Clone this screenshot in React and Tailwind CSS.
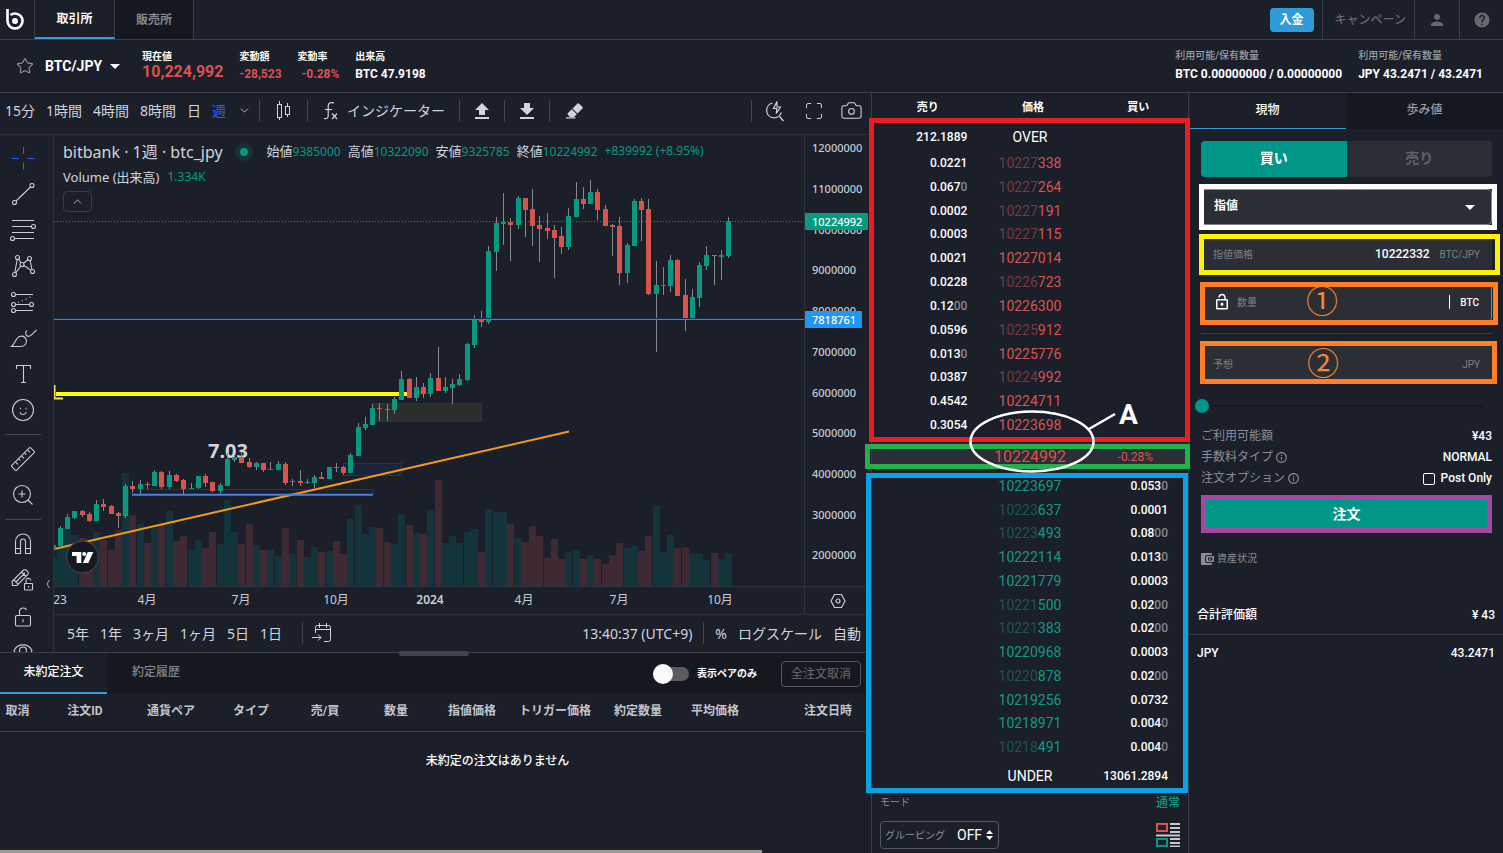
import { useState } from "react";
import { Camera, ChevronDown, ChevronUp, Maximize, Star } from "lucide-react";
import { MdHelp, MdInfoOutline, MdLockOpen, MdPerson } from "react-icons/md";

const UP = "#089981";
const DOWN = "#d9534d";
const PANE_X = 54;
const PANE_Y = 135;
const PANE_BOTTOM = 586;

// [direction, body top, body bottom, wick top, wick bottom, volume top]
const candles = [
  ["u", 545, 549, 545, 549, 558], ["u", 528, 546, 526, 546, 547], ["u", 517, 529, 514, 529, 529],
  ["u", 511, 518, 511, 519, 535], ["d", 511, 515, 510, 517, 538], ["d", 514, 521, 512, 522, 540],
  ["u", 504, 521, 500, 521, 532], ["d", 504, 507, 499, 511, 540], ["d", 506, 514, 505, 514, 550],
  ["d", 513, 516, 512, 528, 530], ["u", 486, 516, 484, 518, 473], ["d", 486, 489, 481, 493, 515],
  ["u", 484, 489, 480, 494, 524], ["d", 484, 485, 482, 489, 543], ["u", 472, 486, 470, 486, 528],
  ["d", 472, 487, 471, 489, 525], ["u", 475, 487, 471, 489, 511], ["d", 475, 481, 474, 482, 541],
  ["d", 480, 489, 479, 494, 536], ["u", 488, 489, 483, 489, 550], ["u", 476, 488, 476, 489, 540],
  ["d", 476, 483, 474, 487, 548], ["d", 482, 491, 482, 492, 532], ["u", 485, 491, 483, 494, 544],
  ["u", 459, 486, 453, 486, 500], ["u", 457, 460, 455, 462, 532], ["d", 457, 463, 452, 463, 544],
  ["d", 462, 467, 458, 468, 524], ["u", 463, 467, 462, 470, 545], ["d", 463, 470, 463, 472, 550],
  ["u", 469, 470, 462, 470, 550], ["u", 464, 470, 461, 470, 556], ["d", 464, 483, 462, 485, 528],
  ["u", 481, 482, 479, 486, 554], ["d", 481, 483, 470, 486, 540], ["u", 482, 483, 479, 484, 557],
  ["u", 477, 483, 475, 488, 547], ["d", 477, 479, 472, 479, 552], ["u", 467, 479, 467, 479, 551],
  ["d", 467, 468, 463, 472, 541], ["d", 467, 473, 466, 475, 554], ["u", 455, 473, 453, 473, 519],
  ["u", 427, 456, 423, 456, 505], ["u", 424, 428, 417, 430, 534], ["u", 408, 425, 404, 425, 527],
  ["d", 408, 409, 403, 421, 528], ["d", 409, 410, 404, 421, 542], ["u", 399, 410, 397, 414, 544],
  ["u", 379, 400, 371, 400, 514], ["d", 379, 398, 378, 398, 525], ["u", 387, 398, 377, 401, 533],
  ["d", 387, 394, 383, 398, 534], ["u", 378, 394, 373, 397, 510], ["d", 378, 391, 347, 391, 480],
  ["u", 387, 391, 377, 393, 543], ["u", 384, 388, 379, 404, 536], ["u", 379, 385, 374, 386, 543],
  ["u", 344, 380, 343, 381, 532], ["u", 319, 345, 315, 348, 529], ["d", 319, 322, 311, 327, 552],
  ["u", 251, 322, 246, 324, 509], ["u", 223, 252, 217, 271, 512], ["u", 222, 224, 193, 245, 512],
  ["d", 222, 225, 218, 261, 524], ["u", 198, 225, 196, 229, 538], ["d", 198, 210, 198, 237, 542],
  ["d", 209, 226, 189, 246, 526], ["d", 225, 229, 216, 262, 536], ["d", 228, 231, 213, 239, 558],
  ["d", 230, 238, 225, 278, 539], ["d", 236, 247, 227, 254, 559], ["u", 216, 247, 208, 250, 552],
  ["u", 199, 217, 182, 217, 550], ["d", 199, 204, 187, 209, 559], ["u", 192, 204, 180, 204, 555],
  ["d", 192, 210, 189, 220, 559], ["d", 209, 226, 205, 226, 564], ["d", 225, 227, 224, 256, 555],
  ["d", 226, 273, 217, 285, 543], ["u", 245, 273, 243, 283, 548], ["u", 201, 246, 199, 246, 546],
  ["d", 201, 210, 198, 241, 551], ["d", 209, 294, 199, 295, 536], ["u", 285, 294, 261, 352, 505],
  ["u", 285, 286, 267, 295, 552], ["u", 260, 286, 255, 292, 535], ["d", 260, 296, 259, 296, 548],
  ["d", 295, 320, 279, 331, 547], ["u", 297, 320, 289, 320, 554], ["u", 265, 298, 262, 307, 554],
  ["u", 255, 266, 246, 270, 560], ["d", 255, 256, 255, 285, 553], ["u", 255, 257, 250, 280, 559],
  ["u", 221, 256, 217, 258, 553],
];

const priceTicks = [
  ["12000000", 148], ["11000000", 189], ["10000000", 230], ["9000000", 270], ["8000000", 311],
  ["7000000", 352], ["6000000", 393], ["5000000", 433], ["4000000", 474], ["3000000", 515], ["2000000", 555],
];

const timeTicks = [
  ["23", 60], ["4月", 147], ["7月", 241], ["10月", 336], ["2024", 430], ["4月", 524], ["7月", 619], ["10月", 720],
];

// price: [dimmed part, bright part], amount: [bright part, dimmed part]
const asks = [
  [["10227", "338"], ["0.0221", ""]],
  [["10227", "264"], ["0.067", "0"]],
  [["10227", "191"], ["0.0002", ""]],
  [["10227", "115"], ["0.0003", ""]],
  [["", "10227014"], ["0.0021", ""]],
  [["10226", "723"], ["0.0228", ""]],
  [["", "10226300"], ["0.12", "00"]],
  [["10225", "912"], ["0.0596", ""]],
  [["", "10225776"], ["0.013", "0"]],
  [["10224", "992"], ["0.0387", ""]],
  [["", "10224711"], ["0.4542", ""]],
  [["", "10223698"], ["0.3054", ""]],
];

const bids = [
  [["", "10223697"], ["0.053", "0"]],
  [["10223", "637"], ["0.0001", ""]],
  [["10223", "493"], ["0.08", "00"]],
  [["", "10222114"], ["0.013", "0"]],
  [["", "10221779"], ["0.0003", ""]],
  [["10221", "500"], ["0.02", "00"]],
  [["10221", "383"], ["0.02", "00"]],
  [["", "10220968"], ["0.0003", ""]],
  [["10220", "878"], ["0.02", "00"]],
  [["", "10219256"], ["0.0732", ""]],
  [["", "10218971"], ["0.004", "0"]],
  [["10218", "491"], ["0.004", "0"]],
];

const orderColumns = [
  ["取消", "w-[35px]"],
  ["注文ID", "w-[100px]"],
  ["通貨ペア", "w-[72px]"],
  ["タイプ", "w-[88px]"],
  ["売/買", "w-[60px]"],
  ["数量", "w-[82px]"],
  ["指値価格", "w-[70px]"],
  ["トリガー価格", "w-[96px]"],
  ["約定数量", "w-[70px]"],
  ["平均価格", "w-[84px]"],
  ["注文日時", "w-[142px]"],
  ["", "w-[96px]"],
];

const ToolIcon = ({ label, className = "", children }) => (
  <button aria-label={label} className={`flex h-9 w-full shrink-0 items-center justify-center ${className}`}>
    <svg width="28" height="28" viewBox="0 0 28 28" fill="none" stroke="currentColor" strokeWidth="1.1">
      {children}
    </svg>
  </button>
);

const Divider = () => <span className="block h-[22px] w-px shrink-0 bg-[#434651]" />;

const DrawingTools = () => (
  <div className="relative w-[54px] shrink-0 border-r border-[#2d323d]">
    <div className="absolute inset-0 overflow-hidden">
      <div className="flex w-[46px] flex-col pt-[5px] text-[#c9ccd4]">
        <ToolIcon label="十字線" className="text-[#2f5fef]">
          <path d="M3 14.5h7M18.500 14.500h7M14.500 3v7M14.500 18.500v7" />
        </ToolIcon>
        <ToolIcon label="トレンドライン">
          <circle cx="23" cy="5.5" r="2" />
          <circle cx="5.5" cy="22.5" r="2" />
          <path d="M7 21L21.500 7" />
        </ToolIcon>
        <ToolIcon label="フィボナッチ">
          <path d="M3 4.500h22M3 10.500h19.500M3 16.500h22M5.500 22.500H25" />
          <circle cx="24.500" cy="10.500" r="2" />
          <circle cx="3.500" cy="22.500" r="2" />
        </ToolIcon>
        <ToolIcon label="パターン">
          <circle cx="8.500" cy="5.500" r="2" />
          <circle cx="20.500" cy="6.500" r="2" />
          <circle cx="13" cy="12.500" r="2" />
          <circle cx="5.500" cy="22.500" r="2" />
          <circle cx="23.500" cy="19.500" r="2" />
          <path d="M8.200 7.500L5.800 20.500M9.700 7l2.200 3.800M14.500 11.200l4.500-3.500M21 8.500l2 9M11.800 14.200L6.700 20.800M14.800 13.500l7 4.800" />
        </ToolIcon>
        <ToolIcon label="予測ツール">
          <circle cx="4.500" cy="6.500" r="2" />
          <circle cx="4.500" cy="16.500" r="2" />
          <circle cx="22.500" cy="16.500" r="2" />
          <circle cx="4.500" cy="22.500" r="2" />
          <path d="M6.500 6.500H24M6.500 16.500h14M6.500 22.500H24" />
          <path d="M9 14.500L24 8" strokeDasharray="1 3.200" />
        </ToolIcon>
        <ToolIcon label="ブラシ">
          <path d="M2.500 22.500h9.500c4 0 6.500-3.500 5-7.500-1.500-3.500-6.500-4-9-.5-2 2.800-2.500 5.500-5.500 8z" />
          <path d="M18 6.500c-2 1.300-1.800 4.800.7 5.800 2.400.7 4-1.600 5.300-3L27.500 6" />
        </ToolIcon>
        <ToolIcon label="テキスト">
          <path d="M7.500 9V5.500h14V9M14.500 5.500v17M12 22.500h5" />
        </ToolIcon>
        <ToolIcon label="アイコン">
          <circle cx="14" cy="14" r="10.500" />
          <path d="M10.800 16.200c1 3 5.400 3 6.400 0" />
          <path d="M11 12.500h1M16.500 12.500h1" strokeWidth="1.600" />
        </ToolIcon>
        <div className="my-1.5 ml-[5px] h-px w-9 bg-[#434651]" />
        <ToolIcon label="定規">
          <path d="M2.800 20.300L20.300 2.800q.7-.7 1.400 0l3.500 3.500q.7.700 0 1.400L7.700 25.200q-.7.700-1.400 0l-3.500-3.500q-.7-.7 0-1.400z" />
          <path d="M6.500 16.800l2.500 2.500M9.500 13.800l1.800 1.800M12.500 10.800l2.500 2.500M15.500 7.800l1.800 1.800M18.500 4.800l2.500 2.500" />
        </ToolIcon>
        <ToolIcon label="ズームイン">
          <circle cx="13" cy="13" r="8.500" />
          <path d="M19 19l4.500 4.500M9.500 13h7M13 9.500v7" />
        </ToolIcon>
        <div className="my-1.5 ml-[5px] h-px w-9 bg-[#434651]" />
        <ToolIcon label="マグネット">
          <path d="M6.500 23.500v-12a7.500 7.500 0 0115 0v12h-5v-12a2.500 2.500 0 00-5 0v12zM6.500 18.500h5M16.500 18.500h5" />
        </ToolIcon>
        <ToolIcon label="描画を固定">
          <path d="M3.500 19.500L3 15.500 14.500 4q1.200-1 2.500 0l2 2q1 1.200 0 2.500L8 19.500zM5 14l4 4M12.500 6l4.500 4.500M7 16l9-9" />
          <rect x="15.500" y="17.500" width="8" height="6.500" rx=".5" />
          <path d="M17 17.500v-2.500a2.400 2.400 0 014.800-.5M19.500 20v1.500" />
        </ToolIcon>
        <ToolIcon label="描画ツールをロック">
          <rect x="6.500" y="13.500" width="15" height="10.500" rx="1.500" />
          <path d="M10.500 13.500V9.500a3.700 3.700 0 017-1.500M14 17.200v3" />
        </ToolIcon>
        <ToolIcon label="描画を非表示">
          <path d="M5 12.500c3.800-7.500 14.200-7.500 18 0-3.800 7.500-14.200 7.500-18 0z" />
          <circle cx="14" cy="12.500" r="3.500" />
        </ToolIcon>
      </div>
    </div>
    <svg className="absolute bottom-[63px] left-[45px]" width="6" height="10" fill="none" stroke="#a9adb8">
      <path d="M4.500 1Q.500 5 4.500 9" />
    </svg>
  </div>
);

const ChartToolbar = () => (
  <div className="flex h-[42px] items-center border-b border-[#2d323d] pb-1.5 text-[14px] text-[#d1d4dc]">
    <div className="flex items-center gap-[11px] pl-[5px]">
      <button>15分</button>
      <button>1時間</button>
      <button>4時間</button>
      <button>8時間</button>
      <button>日</button>
      <button className="text-[#2f5fef]">週</button>
    </div>
    <button aria-label="時間足メニュー" className="mr-2 ml-3">
      <ChevronDown size={13} strokeWidth={1.5} />
    </button>
    <Divider />
    <button aria-label="チャートタイプ" className="mx-4">
      <svg width="15" height="22" fill="none" stroke="currentColor">
        <path d="M3.500 1v3M3.500 17v3M11.500 3v3M11.500 14v3" />
        <rect x="1.500" y="4.500" width="4" height="13" />
        <rect x="9.500" y="6.500" width="4" height="8" />
      </svg>
    </button>
    <Divider />
    <button className="mr-3.5 ml-4 flex items-center gap-2">
      <svg width="15" height="20" fill="none" stroke="currentColor" strokeWidth="1.200">
        <path d="M0 17.500c3 .5 4.200-.5 4.200-3V5c0-3 2-4 5.800-3.200M1 8.500h7M8 12.500l5 5.500M13 12.500L8 18" />
      </svg>
      インジケーター
    </button>
    <Divider />
    <button aria-label="アップロード" className="mx-3.5">
      <svg width="16" height="18" fill="currentColor">
        <path d="M8 1l7 7h-4v5H5V8H1zM1 15h14v2H1z" />
      </svg>
    </button>
    <Divider />
    <button aria-label="ダウンロード" className="mx-3.5">
      <svg width="16" height="18" fill="currentColor">
        <path d="M5 1h6v5h4l-7 7-7-7h4zM1 15h14v2H1z" />
      </svg>
    </button>
    <Divider />
    <button aria-label="消しゴム" className="ml-4">
      <svg width="18" height="18" fill="currentColor">
        <path d="M11.500 1.500q.700-.700 1.400 0l3.600 3.600q.700.700 0 1.400L11.500 11.500 6.500 6.500zM5.800 7.200l5 5L8 15H4L2 13q-1-1 0-2zM0 15.300h9.500v1.200H0z" />
      </svg>
    </button>
    <div className="ml-auto flex items-center gap-4 pr-2">
      <Divider />
      <button aria-label="検索" className="mr-0.5 -ml-1">
        <svg width="22" height="22" fill="none" stroke="currentColor" strokeWidth="1.200">
          <path d="M8.500 3a7.500 7.500 0 108.800 9.500M15.500 16.500l4 4.500M13 1.500L9.500 8.500h3.300l-.5 5L16.500 7h-3.500z" />
        </svg>
      </button>
      <button aria-label="全画面">
        <Maximize size={20} strokeWidth={1.2} />
      </button>
      <button aria-label="スナップショット">
        <Camera size={23} strokeWidth={1.1} />
      </button>
    </div>
  </div>
);

const candleX = (i) => Math.round(52.500 + i * 7.266);

const ChartPane = () => (
  <div className="relative h-[451px] overflow-hidden">
    <svg className="h-full w-full">
      <g transform={`translate(${-PANE_X} ${-PANE_Y})`}>
        <g shapeRendering="crispEdges">
          {candles.map((c, i) => (
            <rect
              key={i}
              x={candleX(i) - 3}
              y={c[5]}
              width="6.500"
              height={PANE_BOTTOM - c[5]}
              fill={c[0] === "u" ? "#13343a" : "#3f2932"}
            />
          ))}
        </g>
        <rect x="372.500" y="403.500" width="109" height="18" fill="#2b2e2b" stroke="#1f3548" />
        <rect x="343.500" y="463.500" width="58" height="12" fill="#1b2438" stroke="#1d3850" />
        <path d="M132 489.500H372.500V494" fill="none" stroke="#1d3850" />
        <path d="M54 549L569 431.500" stroke="#f39a1d" strokeWidth="2" />
        <path d="M132 494.700H373" stroke="#4a80dc" strokeWidth="2" />
        <path d="M54.500 385V398.500H63" fill="none" stroke="#f0e36a" strokeWidth="2" />
        <path d="M56 394H408" stroke="#ffff00" strokeWidth="4" />
        <path d="M54 221.500H804" stroke={UP} strokeDasharray="1 2" />
        <text x="208" y="458" fill="#d1d4dc" fontSize="20" fontWeight="700">7.03</text>
        <g shapeRendering="crispEdges">
          {candles.map((c, i) => (
            <g key={i}>
              <rect x={candleX(i)} y={c[3]} width="1" height={c[4] - c[3]} fill="#85878c" />
              <rect x={candleX(i) - 2} y={c[1]} width="5" height={c[2] - c[1]} fill={c[0] === "u" ? UP : DOWN} />
            </g>
          ))}
        </g>
        <rect x="54" y="318" width="750" height="1" fill="#10304f" />
        <rect x="54" y="319" width="750" height="1" fill="#2b8ae6" />
        <circle cx="82.500" cy="557" r="16" fill="#161922" stroke="#454851" />
        <path d="M72 552h9.300v11h-4.700v-7H72zM87.700 552h5.600l-5 11h-5.300z" fill="#fff" />
        <circle cx="84.200" cy="554" r="2" fill="#fff" />
      </g>
    </svg>
    <div className="absolute top-[5px] left-[9px] flex items-center text-[#d1d4dc]">
      <span className="text-[16px]">bitbank · 1週 · btc_jpy</span>
      <span className="mr-3.5 ml-3 flex size-[18px] items-center justify-center rounded-full bg-[#14343a]">
        <span className="size-2 rounded-full bg-[#089981]" />
      </span>
      <div className="flex gap-[7px] text-[12px]">
        <span><span className="text-[13px]">始値</span><span className="text-[#089981]">9385000</span></span>
        <span><span className="text-[13px]">高値</span><span className="text-[#089981]">10322090</span></span>
        <span><span className="text-[13px]">安値</span><span className="text-[#089981]">9325785</span></span>
        <span><span className="text-[13px]">終値</span><span className="text-[#089981]">10224992</span></span>
        <span className="text-[#089981]">+839992 (+8.95%)</span>
      </div>
    </div>
    <div className="absolute top-8 left-[9px] flex items-center gap-2 text-[13px] leading-5 text-[#d1d4dc]">
      <span>Volume (出来高)</span>
      <span className="text-[12px] text-[#089981]">1.334K</span>
    </div>
    <button
      aria-label="凡例を閉じる"
      className="absolute top-14 left-[9px] flex h-[21px] w-[29px] items-center justify-center rounded-sm border border-[#363a45] text-[#c9ccd4]"
    >
      <ChevronUp size={13} strokeWidth={1.5} />
    </button>
  </div>
);

const PriceAxis = () => (
  <svg className="h-[451px] w-[67px] border-l border-[#2d323d]" fontSize="11" fontWeight="500" fill="#c9ccd4">
    {priceTicks.map(([label, y]) => (
      <text key={label} x="7" y={y - PANE_Y + 4}>{label}</text>
    ))}
    <rect x="0" y="78" width="63" height="17" rx="1" fill={UP} />
    <text x="7" y="91" fill="#fff">10224992</text>
    <rect x="0" y="176" width="57" height="17" rx="1" fill="#2196f3" />
    <text x="7" y="189" fill="#fff">7818761</text>
  </svg>
);

const RangeBar = () => (
  <div className="flex h-[37px] items-center pb-px text-[14px] text-[#d1d4dc]">
    <div className="mr-5 flex gap-[11px] pl-[13px]">
      <button>5年</button>
      <button>1年</button>
      <button>3ヶ月</button>
      <button>1ヶ月</button>
      <button>5日</button>
      <button>1日</button>
    </div>
    <Divider />
    <button aria-label="日付へ移動" className="ml-2">
      <svg width="22" height="22" fill="none" stroke="currentColor">
        <path d="M4.500 11V5.500q0-2 2-2h11q2 0 2 2v12q0 2-2 2H13M4.500 7.500h15M8.500 1v5M15.500 1v5M1 15.500h9M7 12.500l3 3-3 3" />
      </svg>
    </button>
    <div className="ml-auto flex items-center gap-[11px] pr-2.5">
      <button>13:40:37 (UTC+9)</button>
      <Divider />
      <button>%</button>
      <button>ログスケール</button>
      <button>自動</button>
    </div>
  </div>
);

const Chart = () => (
  <section className="font-['Noto_Sans','Noto_Sans_CJK_JP',sans-serif]">
    <ChartToolbar />
    <div className="flex">
      <DrawingTools />
      <div className="min-w-0 flex-1">
        <div className="grid grid-cols-[1fr_67px]">
          <ChartPane />
          <PriceAxis />
          <svg className="h-[29px] w-full border-y border-[#2d323d]" fontSize="12" fill="#c9ccd4" textAnchor="middle">
            {timeTicks.map(([label, x]) => (
              <text key={x} x={x - PANE_X} y="17" fontWeight={label === "2024" ? 600 : 400}>{label}</text>
            ))}
          </svg>
          <button aria-label="チャート設定" className="flex items-center justify-center border-y border-l border-[#2d323d] text-[#c9ccd4]">
            <svg width="16" height="16" fill="none" stroke="currentColor" strokeWidth="1.200">
              <path d="M4.500 1.500h7L15 8l-3.500 6.500h-7L1 8z" />
              <circle cx="8" cy="8" r="2" />
            </svg>
          </button>
        </div>
        <RangeBar />
      </div>
    </div>
  </section>
);

const Orders = () => {
  const [pairOnly, setPairOnly] = useState(false);

  return (
    <section className="relative flex min-h-[200px] flex-1 flex-col border-t border-[#3a3e47]">
      <div className="absolute -top-0.5 left-[399px] h-[5px] w-[70px] rounded-sm bg-[#3f434c]" />
      <div className="flex h-[41px] items-stretch bg-[#15191f] text-[12px]">
        <button className="w-[107px] border-b-2 border-[#3a9ad9] bg-[#1a1f2a] pb-0.5 font-medium text-white">未約定注文</button>
        <button className="w-[98px] pb-1 font-medium text-[#83868c]">約定履歴</button>
        <label className="ml-auto flex items-center gap-2 text-[10px] font-bold text-white">
          <input
            type="checkbox"
            checked={pairOnly}
            onChange={(e) => setPairOnly(e.target.checked)}
            className="relative h-3.5 w-9 appearance-none rounded-full bg-[#5c5c5e] before:absolute before:-top-[3px] before:left-0 before:size-5 before:rounded-full before:bg-[#fafafa] checked:before:left-4"
          />
          表示ペアのみ
        </label>
        <button className="mr-2.5 ml-6 h-[26px] w-20 self-center rounded-sm border border-[#55585f] text-[12px] text-[#686b71]">
          全注文取消
        </button>
      </div>
      <div className="flex-1 overflow-hidden">
        <table className="w-[995px] table-fixed text-[12px]">
          <thead>
            <tr className="h-[37px] border-b border-[#3a3e47] text-[#c3c5ca]">
              {orderColumns.map(([label, width]) => (
                <th key={label} className={`${width} pb-0.5 font-bold`}>{label}</th>
              ))}
            </tr>
          </thead>
          <tbody>
            <tr>
              <td colSpan={12} className="pt-5 text-center font-medium text-white">未約定の注文はありません</td>
            </tr>
          </tbody>
        </table>
      </div>
      <div className="h-[3px] w-7/8 bg-[#9b9b9b]" />
    </section>
  );
};

const Price = ({ parts, dim, bright }) => (
  <td className="text-center text-[14px] font-normal">
    <span className={dim}>{parts[0]}</span>
    <span className={bright}>{parts[1]}</span>
  </td>
);

const Amount = ({ parts }) => (
  <>
    {parts[0]}
    <span className="text-[#85888f]">{parts[1]}</span>
  </>
);

const OrderBook = () => (
  <section className="relative z-10 w-[318px] shrink-0 border-x border-[#3a3e47] text-white">
    <div className="h-[350px]">
      <table className="h-[344px] w-full table-fixed">
        <thead>
          <tr className="h-[30px] text-[11px]">
            <th className="pl-1.5">売り</th>
            <th className="pl-1.5">価格</th>
            <th className="pl-1.5">買い</th>
          </tr>
        </thead>
        <tbody className="text-[12px] leading-5 font-medium">
          <tr className="h-7">
            <td className="pr-2.5 text-right">212.1889</td>
            <td className="text-center text-[14px] font-normal">OVER</td>
            <td />
          </tr>
          {asks.map(([price, amount]) => (
            <tr key={price.join("")}>
              <td className="pr-2.5 text-right"><Amount parts={amount} /></td>
              <Price parts={price} dim="text-[#75393f]" bright="text-[#d9534f]" />
              <td />
            </tr>
          ))}
        </tbody>
      </table>
      <div className="absolute top-[25px] -right-0.5 -left-[3px] h-[324px] border-[5px] border-[#ea1c24]" />
    </div>
    <div className="relative grid h-[27px] grid-cols-3 items-center bg-[#2b2e36] text-center text-[#d9534f]">
      <span />
      <span className="text-[16px]">10224992</span>
      <span className="text-[12px]">-0.28%</span>
      <div className="absolute top-px -right-0.5 bottom-px -left-[7px] border-[5px] border-[#22b14c]" />
    </div>
    <div className="relative pt-[4px]">
      <table className="h-[319px] w-full table-fixed text-[12px] leading-5 font-medium">
        <tbody>
          {bids.map(([price, amount]) => (
            <tr key={price.join("")}>
              <td />
              <Price parts={price} dim="text-[#1c5453]" bright="text-[#159885]" />
              <td className="pr-5 text-right"><Amount parts={amount} /></td>
            </tr>
          ))}
          <tr className="h-[34px]">
            <td />
            <td className="text-center text-[14px] font-normal">UNDER</td>
            <td className="pr-5 text-right">13061.2894</td>
          </tr>
        </tbody>
      </table>
      <div className="absolute top-[3px] right-0 bottom-0 -left-1.5 border-[5px] border-[#0aa2e2]" />
    </div>
    <div className="flex justify-between px-2 pt-0.5 text-[12px] leading-4">
      <span className="text-[10px] text-[#8d9096]">モード</span>
      <span className="font-medium text-[#159885]">通常</span>
    </div>
    <div className="flex items-center justify-between px-2 pt-2.5">
      <label className="relative flex h-7 w-[119px] items-center rounded-sm border border-[#55585f] pl-1 text-[10px] whitespace-nowrap text-[#8d9096]">
        グルーピング
        <select className="ml-3 w-9 appearance-none bg-transparent text-[14px] text-white">
          <option className="bg-[#1a1f2a]">OFF</option>
        </select>
        <svg className="pointer-events-none absolute right-[5px]" width="7" height="10" fill="#fff">
          <path d="M3.500 0L7 4H0zM3.500 10L7 6H0z" />
        </svg>
      </label>
      <button aria-label="板表示">
        <svg width="24" height="24" fill="none">
          <rect x="1" y="1" width="10" height="7" stroke={DOWN} strokeWidth="2" />
          <rect x="1" y="16" width="10" height="7" stroke={UP} strokeWidth="2" />
          <path d="M14 1h10M14 5h10M14 9h10M0 12.500h24M14 16h10M14 20h10M14 23.500h10" stroke="#c8c8c8" strokeWidth="1.800" />
        </svg>
      </button>
    </div>
    {/* callout "A" over the best ask and the last price */}
    <svg className="pointer-events-none absolute top-[300px] left-0 h-[90px] w-full" fill="none" stroke="#fff" strokeWidth="2.500">
      <ellipse cx="160" cy="48.500" rx="61.500" ry="30" />
      <path d="M217 36L243 21" />
      <text x="247" y="31" fill="#fff" stroke="none" fontSize="28" fontWeight="700">A</text>
    </svg>
  </section>
);

const TradePanel = () => {
  const [price, setPrice] = useState("10222332");
  const [amount, setAmount] = useState("");

  return (
    <section className="flex w-[314px] shrink-0 flex-col text-white">
      <div className="flex h-9 text-[12px] font-medium">
        <button className="flex-1 border-b border-[#3a9ad9] pb-0.5">現物</button>
        <button className="flex-1 bg-[#15191f] pb-0.5 text-[#9b9ea4]">歩み値</button>
      </div>
      <form className="flex flex-col pt-3 pr-[11px] pl-3" onSubmit={(e) => e.preventDefault()}>
        <div className="mb-3 flex h-9 overflow-hidden rounded text-[14px] font-bold">
          <button type="button" className="flex-1 bg-[#009688] pb-0.5">買い</button>
          <button type="button" className="flex-1 bg-[#2b2e35] pb-0.5 text-[#5f6268]">売り</button>
        </div>
        <div className="relative mb-3 h-9">
          <select aria-label="注文方法" className="h-9 w-full appearance-none rounded-sm border border-[#85878c] bg-[#2b2e35] px-3 pb-0.5 text-[12px] font-bold">
            <option>指値</option>
          </select>
          <svg className="pointer-events-none absolute top-4 right-[17px]" width="10" height="5" fill="#fff">
            <path d="M0 0h10L5 5z" />
          </svg>
          <div className="pointer-events-none absolute -inset-y-[5px] -right-[5px] -left-0.5 border-[5px] border-white" />
        </div>
        <div className="relative mb-3 flex h-9 items-center bg-[#2b2e35] px-3 pb-0.5 text-[#7d8087]">
          <label htmlFor="price" className="text-[10px]">指値価格</label>
          <input
            id="price"
            value={price}
            onChange={(e) => setPrice(e.target.value)}
            className="w-0 flex-1 bg-transparent text-right text-[12px] font-medium text-white outline-none"
          />
          <span className="ml-2.5 text-[10px]">BTC/JPY</span>
          <div className="pointer-events-none absolute -top-[3px] -right-2 -bottom-0.5 -left-0.5 border-[5px] border-[#fff200]" />
        </div>
        <div className="relative flex h-9 items-center rounded-sm border-r border-[#85878c] bg-[#2b2e35] px-3 pb-0.5 text-[#7d8087]">
          <MdLockOpen size={18} className="text-white" />
          <label htmlFor="amount" className="ml-1.5 text-[10px]">数量</label>
          <input
            id="amount"
            value={amount}
            onChange={(e) => setAmount(e.target.value)}
            className="w-0 flex-1 bg-transparent text-right text-[12px] text-white outline-none"
          />
          <span className="h-3.5 w-px bg-white" />
          <span className="ml-2.5 text-[10px] font-medium text-white">BTC</span>
          <span className="pointer-events-none absolute left-[105px] text-[32px] leading-8 text-[#f58634]">①</span>
          <div className="pointer-events-none absolute -top-[3px] -right-[7px] -bottom-1 -left-px border-[5px] border-[#ff7f27]" />
        </div>
        <div className="my-3 h-px bg-[#3a3e47]" />
        <div className="relative flex h-9 items-center bg-[#2b2e35] px-3 text-[#7d8087]">
          <label htmlFor="total" className="text-[10px]">予想</label>
          <input id="total" readOnly className="w-0 flex-1 bg-transparent text-right text-[12px] outline-none" />
          <span className="text-[10px]">JPY</span>
          <span className="pointer-events-none absolute left-[106px] text-[32px] leading-8 text-[#f58634]">②</span>
          <div className="pointer-events-none absolute -top-[5px] -right-[5px] -bottom-0.5 -left-px border-[5px] border-[#ff7f27]" />
        </div>
        <input
          type="range"
          aria-label="数量の割合"
          defaultValue="0"
          className="mt-[23px] mr-2 -ml-1.5 h-0.5 appearance-none bg-[#141820] [&::-webkit-slider-thumb]:size-3.5 [&::-webkit-slider-thumb]:appearance-none [&::-webkit-slider-thumb]:rounded-full [&::-webkit-slider-thumb]:bg-[#009688]"
        />
        <div className="mt-[19px] flex flex-col text-[12px] leading-[21px] text-[#8a8d93]">
          <div className="flex justify-between">
            ご利用可能額<span className="font-medium text-white">¥43</span>
          </div>
          <div className="flex justify-between">
            <span className="flex items-center gap-0.5">手数料タイプ <MdInfoOutline size={13} /></span>
            <span className="font-medium text-white">NORMAL</span>
          </div>
          <div className="flex justify-between">
            <span className="flex items-center gap-0.5">注文オプション <MdInfoOutline size={13} /></span>
            <label className="flex items-center gap-1.5 font-medium text-white">
              <input type="checkbox" className="size-3 appearance-none rounded-xs border border-white checked:bg-[#009688]" />
              Post Only
            </label>
          </div>
        </div>
        <button className="mt-1.5 h-[38px] border-[5px] border-[#a349a4] bg-[#009688] text-[14px] font-bold">
          注文
        </button>
        <div className="mt-[18px] flex items-center gap-[3px] text-[10px] text-[#8a8d93]">
          <svg width="13" height="12" fill="#8a8d93">
            <path d="M1 0h9q1 0 1 1v1H6Q4 2 4 4v4q0 2 2 2h5v1q0 1-1 1H1q-1 0-1-1V1q0-1 1-1zM6 3h7v6H6Q5 9 5 8V4q0-1 1-1zM7 4.500v3h4.500v-3zM8 5.200h1.600v1.600H8z" fillRule="evenodd" />
          </svg>
          資産状況
        </div>
      </form>
      <dl className="mt-9 text-[12px] font-medium">
        <div className="flex h-[33px] items-center justify-between border-b border-[#3a3e47] px-2 pb-1.5">
          <dt>合計評価額</dt>
          <dd>¥ 43</dd>
        </div>
        <div className="flex h-9 items-center justify-between px-2">
          <dt>JPY</dt>
          <dd>43.2471</dd>
        </div>
      </dl>
    </section>
  );
};

const TopBar = () => (
  <header className="flex h-10 border-b border-[#3a3e47] text-[12px]">
    <a href="#" aria-label="bitbank" className="flex w-[35px] items-center border-r border-[#3a3e47] pl-1.5">
      <svg width="18" height="21" fill="none" stroke="#fff" strokeWidth="2.600">
        <path d="M1.500 0v12a7.500 7.500 0 107.500-7.500c-1.800 0-3.200.5-4.500 1.500" />
        <circle cx="9" cy="12" r="3" fill="#fff" stroke="none" />
      </svg>
    </a>
    <nav className="flex font-bold">
      <a href="#" className="flex w-20 items-center justify-center border-r border-b-2 border-r-[#3a3e47] border-b-[#3a9ad9] text-white">
        取引所
      </a>
      <a href="#" className="flex w-[79px] items-center justify-center border-r border-[#3a3e47] bg-[#15191f] text-[#85888e]">
        販売所
      </a>
    </nav>
    <div className="ml-auto flex items-center text-[#65686e]">
      <button className="mr-2 h-6 w-11 rounded-sm bg-[#2f9bdb] font-bold text-white">入金</button>
      <a href="#" className="flex h-full items-center border-l border-[#3a3e47] pr-2 pl-3 font-medium">キャンペーン</a>
      <button aria-label="アカウント" className="flex h-full w-[45px] items-center justify-center border-l border-[#3a3e47]">
        <MdPerson size={18} />
      </button>
      <button aria-label="ヘルプ" className="flex h-full w-11 items-center justify-center border-l border-[#3a3e47]">
        <MdHelp size={18} />
      </button>
    </div>
  </header>
);

const Stat = ({ label, children }) => (
  <div>
    <div className="text-[10px] leading-4">{label}</div>
    {children}
  </div>
);

const TickerBar = () => (
  <div className="flex h-[53px] items-center border-b border-[#3a3e47] text-[12px] font-bold text-white">
    <button aria-label="お気に入り" className="ml-4 text-[#8d9096]">
      <Star size={18} strokeWidth={1.5} />
    </button>
    <button className="mr-[22px] ml-[11px] flex items-center gap-2 text-[14px]">
      BTC/JPY
      <svg width="10" height="5" fill="#fff">
        <path d="M0 0h10L5 5z" />
      </svg>
    </button>
    <div className="flex gap-4">
      <Stat label="現在値">
        <div className="h-[18px] text-[16px] leading-[14px] text-[#d9534f]">10,224,992</div>
      </Stat>
      <Stat label="変動額">
        <div className="leading-[18px] text-[#d9534f]">-28,523</div>
      </Stat>
      <Stat label="変動率">
        <div className="pl-1 leading-[18px] text-[#d9534f]">-0.28%</div>
      </Stat>
      <Stat label="出来高">
        <div className="leading-[18px]">BTC 47.9198</div>
      </Stat>
    </div>
    <div className="mr-5 ml-auto flex gap-4 pb-0.5">
      <div>
        <div className="text-[10px] leading-[19px] font-medium text-[#9b9ea4]">利用可能/保有数量</div>
        <div className="leading-[19px]">BTC 0.00000000 / 0.00000000</div>
      </div>
      <div>
        <div className="text-[10px] leading-[19px] font-medium text-[#9b9ea4]">利用可能/保有数量</div>
        <div className="leading-[19px]">JPY 43.2471 / 43.2471</div>
      </div>
    </div>
  </div>
);

export default function App() {
  return (
    <div className="flex min-h-screen flex-col overflow-hidden bg-[#1a1f2a] font-['Roboto','Noto_Sans_CJK_JP',sans-serif]">
      <TopBar />
      <TickerBar />
      <main className="flex flex-1">
        <div className="flex min-w-0 flex-1 flex-col">
          <Chart />
          <Orders />
        </div>
        <OrderBook />
        <TradePanel />
      </main>
    </div>
  );
}
